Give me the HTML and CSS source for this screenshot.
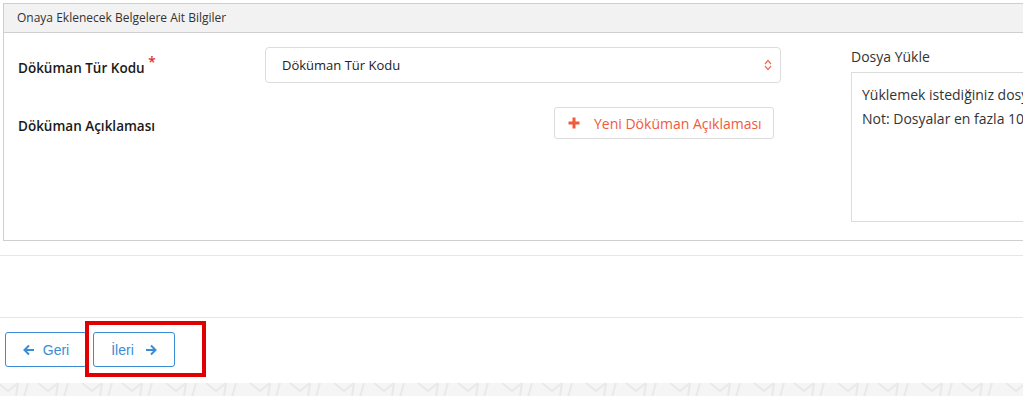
FILE: index.html
```html
<!DOCTYPE html>
<html lang="tr">
	<head>
		<meta charset="utf-8" />
		<title>Belge Ekle</title>
		<link rel="stylesheet" href="styles.css">
	</head>
	<body>
		<div class="page">
			<!-- belge bilgileri paneli -->
			<div class="panel">
				<div class="panel-head">Onaya Eklenecek Belgelere Ait Bilgiler</div>
				<div class="panel-body">
					<div class="form-col">
						<div class="row">
							<label class="lbl">Döküman Tür Kodu <span class="req">*</span></label>
							<div class="select">
								<span>Döküman Tür Kodu</span>
								<svg class="arrows" width="8" height="12" viewBox="0 0 8 12">
									<path d="M1 5 L4 1.5 L7 5 M1 7 L4 10.5 L7 7" fill="none" stroke="#f36b5a" stroke-width="1.2"/>
								</svg>
							</div>
						</div>
						<div class="row row2">
							<label class="lbl">Döküman Açıklaması</label>
							<div class="ctrl">
								<button class="btn-add">
									<svg width="12" height="12" viewBox="0 0 12 12">
										<path d="M6 0.5 V11.5 M0.5 6 H11.5" stroke="#f05a3c" stroke-width="3"/>
									</svg>
									Yeni Döküman Açıklaması
								</button>
							</div>
						</div>
					</div>
					<div class="upload-col">
						<div class="up-title">Dosya Yükle</div>
						<div class="up-box">
							<p>Yüklemek istediğiniz dosyaları buraya sürükleyin</p>
							<p>Not: Dosyalar en fazla 10 MB olabilir.</p>
						</div>
					</div>
				</div>
			</div>

			<div class="sep"></div>
			<div class="sep sep2"></div>

			<div class="nav">
				<button class="btn-nav">
					<svg width="12" height="12" viewBox="0 0 12 12"><path d="M11 6 H2 M6 1.5 L1.5 6 L6 10.5" fill="none" stroke="#3a8dd4" stroke-width="2"/></svg>
					Geri
				</button>
				<button class="btn-nav next">
					İleri
					<svg width="12" height="12" viewBox="0 0 12 12"><path d="M1 6 H10 M6 1.5 L10.5 6 L6 10.5" fill="none" stroke="#3a8dd4" stroke-width="2"/></svg>
				</button>
				<div class="mark"></div>
			</div>
		</div>

		<!-- alt desen -->
		<div class="footer">
			<svg width="100%" height="16">
				<defs>
					<pattern id="star" width="84" height="24" patternUnits="userSpaceOnUse" x="-6" y="-4">
						<path d="M4 4 L14 12 L24 4 L22 18 M34 4 L30 18 M44 4 L54 12 L64 4 L62 18 M74 4 L70 18" fill="none" stroke="#e9e9e9" stroke-width="2"/>
					</pattern>
				</defs>
				<rect width="100%" height="16" fill="url(#star)"/>
			</svg>
		</div>
	</body>
</html>
```

FILE: styles.css
```css
/* genel */
body {
	margin: 0;
	overflow: hidden;
	font-family: "Open Sans", "Liberation Sans", sans-serif;
	color: #333;
	background: #fff;
}

.page {
	height: 380px;
	position: relative;
}

/* panel */
.panel {
	margin: 3px 0 0 3px;
	width: 1200px;
	border: 1px solid #cfcfcf;
}

.panel-head {
	height: 28px;
	line-height: 28px;
	padding-left: 13px;
	font-size: 12px;
	background: #f2f2f2;
	border-bottom: 1px solid #cfcfcf;
}

.panel-body {
	display: flex;
	padding: 14px 0 18px 14px;
}

.form-col {
	width: 764px;
}

.row {
	display: flex;
	align-items: center;
}

.row2 {
	margin-top: 24px;
}

.lbl {
	width: 247px;
	font-size: 13.5px;
	font-weight: 600;
	color: #1a1a1a;
	padding-top: 6px;
}

.req {
	color: #e02b2b;
	position: relative;
	top: -6px;
}

.select {
	height: 34px;
	width: 490px;
	border: 1px solid #dcdcdc;
	border-radius: 4px;
	display: flex;
	align-items: center;
	justify-content: space-between;
	padding: 0 8px 0 16px;
	font-size: 13px;
	color: #222;
}

.ctrl {
	padding-left: 289px;
}

.btn-add {
	height: 32px;
	width: 220px;
	border: 1px solid #dcdcdc;
	border-radius: 3px;
	background: #fff;
	font-family: "Open Sans", sans-serif;
	font-size: 14px;
	color: #f05a3c;
	display: flex;
	align-items: center;
	gap: 14px;
	padding: 0 0 0 13px;
}

.upload-col {
	margin-left: 70px;
	width: 400px;
}

.up-title {
	font-size: 14px;
	color: #333;
	line-height: 19px;
}

.up-box {
	margin-top: 6px;
	height: 138px;
	border: 1px solid #dcdcdc;
	padding: 10px 10px 0;
	white-space: nowrap;
	font-size: 14px;
}

.up-box p {
	margin: 0;
	line-height: 24px;
}

/* cizgiler */
.sep {
	margin-top: 14px;
	border-top: 1px solid #e6e6e6;
}

.sep2 {
	margin-top: 61px;
}

/* butonlar */
.nav {
	display: flex;
	gap: 6px;
	padding: 14px 0 0 5px;
	position: relative;
}

.btn-nav {
	height: 35px;
	width: 82px;
	border: 1px solid #3a8dd4;
	border-radius: 3px;
	background: #fff;
	color: #3a8dd4;
	font-family: "Liberation Sans", Arial, sans-serif;
	font-size: 14px;
	display: flex;
	align-items: center;
	justify-content: center;
	gap: 8px;
}

.next {
	gap: 11px;
}

/* isaret kutusu */
.mark {
	position: absolute;
	left: 85px;
	top: 3px;
	width: 113px;
	height: 48px;
	border: 4px solid #e00000;
}

.footer {
	height: 16px;
	background: #f5f5f5;
	line-height: 0;
}
```
